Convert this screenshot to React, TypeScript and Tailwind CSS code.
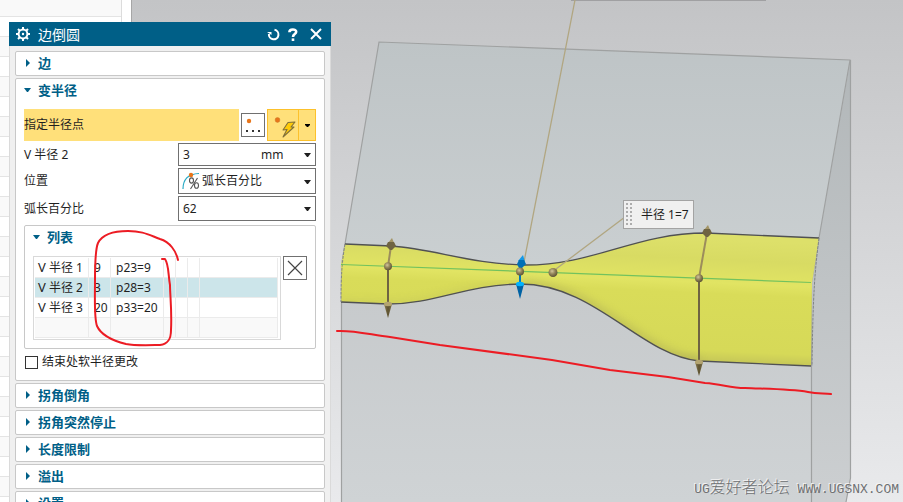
import type { ReactNode } from 'react';

const uiFont = "font-['Noto_Sans','Noto_Sans_CJK_SC',sans-serif]";

function Caret({ className = '' }: { className?: string }) {
  return (
    <svg width="9" height="5" viewBox="0 0 9 5" className={`shrink-0 ${className}`} aria-hidden="true">
      <path d="M1 1h7L5 5H4z" fill="currentColor" />
    </svg>
  );
}

function GroupTitle({ children, open = false }: { children: ReactNode; open?: boolean }) {
  return (
    <button
      type="button"
      aria-expanded={open}
      className="flex h-[22px] w-full items-center gap-[7px] pl-2 text-left text-[13px] leading-4 font-bold text-[#005f87]"
    >
      <svg width="7" height="8" viewBox="0 0 7 8" className="shrink-0" aria-hidden="true">
        {open ? <path d="M0 2h7L4 6H3z" fill="currentColor" /> : <path d="M2 0l4 4-4 4z" fill="currentColor" />}
      </svg>
      {children}
    </button>
  );
}

function Group({ title }: { title: string }) {
  return (
    <section className="shrink-0 rounded-xs border border-[#c8c8c8] bg-white pb-px">
      <h2>
        <GroupTitle>{title}</GroupTitle>
      </h2>
    </section>
  );
}

function TitleBar() {
  return (
    <header className="flex h-6 items-center bg-[#005f87] px-[7px] text-white">
      <svg width="14" height="14" viewBox="0 0 14 14" aria-hidden="true">
        <g stroke="currentColor" strokeWidth="2">
          <path d="M7 0v3M7 11v3M0 7h3M11 7h3M2 2l2 2M10 10l2 2M12 2l-2 2M2 12l2-2" />
          <circle cx="7" cy="7" r="4.4" fill="none" />
        </g>
        <circle cx="7" cy="7" r="1.2" fill="currentColor" />
      </svg>
      <h1 className="ml-2 flex-1 pt-px text-sm leading-5">边倒圆</h1>
      <div className="flex items-center gap-2">
        <button type="button" aria-label="重置">
          <svg width="13" height="13" viewBox="0 0 13 13" fill="none" stroke="currentColor" strokeWidth="2" aria-hidden="true">
            <path d="M7.500 1.800a4.800 4.800 0 1 1-5.600 4.200" />
            <path d="M0 4h4.500v3z" fill="currentColor" stroke="none" />
          </svg>
        </button>
        <button type="button" aria-label="帮助">
          <svg width="10" height="13" viewBox="0 0 10 13" fill="none" stroke="currentColor" strokeWidth="2.6" aria-hidden="true">
            <path d="M1.4 4.2C1.4 0.6 8.2 0.6 8.2 3.8 8.2 6.2 5 5.8 5 9" />
            <path d="M5 10.4V13" />
          </svg>
        </button>
        <button type="button" aria-label="关闭" className="mr-0.5 ml-1">
          <svg width="12" height="12" viewBox="0 0 12 12" fill="none" stroke="currentColor" strokeWidth="2" aria-hidden="true">
            <path d="M1 1l10 10M11 1L1 11" />
          </svg>
        </button>
      </div>
    </header>
  );
}

function PointRow() {
  return (
    <div className="flex h-8 items-center gap-0.5">
      <div className="flex h-8 flex-1 items-center bg-[#ffe07a]">指定半径点</div>
      <button type="button" aria-label="点对话框" className="border border-[#707070] bg-white">
        <svg width="22" height="22" viewBox="0 0 22 22" aria-hidden="true">
          <circle cx="7" cy="7" r="2.2" fill="#e8751a" />
          <path d="M4 16h2v2H4zM10 16h2v2h-2zM16 16h2v2h-2z" fill="#333" />
        </svg>
      </button>
      <div className="flex h-8 border border-[#fcc12c] bg-[#ffe07a]">
        <button type="button" aria-label="自动判断的点">
          <svg width="30" height="30" viewBox="0 0 30 30" aria-hidden="true">
            <circle cx="9.500" cy="10" r="2.4" fill="#e8751a" stroke="#c9762b" strokeWidth=".5" />
            <path d="M20 12.500L27 12l-4 5h3L15 27l4-7.500-4 .5z" fill="#ffcb08" stroke="#80703a" strokeWidth="1.100" strokeLinejoin="round" />
          </svg>
        </button>
        <button type="button" aria-label="更多点类型" className="flex w-[17px] items-center justify-center border-l border-[#fcc12c] text-black">
          <svg width="5" height="3" viewBox="0 0 5 3" aria-hidden="true">
            <path d="M0 0h5v1L3 3H2L0 1z" fill="currentColor" />
          </svg>
        </button>
      </div>
    </div>
  );
}

const fieldBox = 'flex w-[138px] items-center border border-[#707070] bg-white px-[3px]';

function Fields() {
  return (
    <div className="mt-0.5 flex flex-col gap-0.5">
      <div className="flex items-center justify-between">
        <label htmlFor="radius">V 半径 2</label>
        <div className={`${fieldBox} h-[23px]`}>
          <input id="radius" defaultValue="3" className="w-[78px] pl-px outline-none" />
          <select aria-label="单位" className="flex-1 appearance-none pl-px outline-none" defaultValue="mm">
            <option>mm</option>
          </select>
          <Caret />
        </div>
      </div>
      <div className="flex items-center justify-between">
        <label htmlFor="location">位置</label>
        <div className={`${fieldBox} h-[26px]`}>
          <svg width="18" height="18" viewBox="0 0 18 18" fill="none" aria-hidden="true">
            <path d="M1 17C1 9 5 2 17 1.500" stroke="#27a9c4" strokeWidth="1.200" />
            <circle cx="9" cy="3" r="2.200" fill="#e8751a" />
            <g stroke="#555" strokeWidth="1.100">
              <ellipse cx="9.500" cy="8.500" rx="2" ry="2.600" />
              <ellipse cx="14.500" cy="13.500" rx="2" ry="2.800" />
              <path d="M15.500 6L8.500 17" />
            </g>
          </svg>
          <select id="location" className="ml-0.5 min-w-0 flex-1 appearance-none outline-none" defaultValue="弧长百分比">
            <option>弧长百分比</option>
          </select>
          <Caret />
        </div>
      </div>
      <div className="flex items-center justify-between">
        <label htmlFor="arc">弧长百分比</label>
        <div className={`${fieldBox} h-[25px]`}>
          <input id="arc" defaultValue="62" className="min-w-0 flex-1 pl-px outline-none" />
          <button type="button" aria-label="弧长百分比选项">
            <Caret />
          </button>
        </div>
      </div>
    </div>
  );
}

const radii = [
  { name: 'V 半径 1', value: '9', expr: 'p23=9' },
  { name: 'V 半径 2', value: '3', expr: 'p28=3' },
  { name: 'V 半径 3', value: '20', expr: 'p33=20' },
  { name: '', value: '', expr: '' },
];

const rowTone = ['bg-white', 'bg-[#cce5ea]', 'bg-white', 'bg-[#f9f9f9]'];
const cell = 'h-5 border-r border-b border-[#ebebeb] p-0';

function RadiusList() {
  return (
    <div className="mt-1 h-[124px] rounded-xs border border-[#c8c8c8] bg-white">
      <h3>
        <GroupTitle open>列表</GroupTitle>
      </h3>
      <div className="mt-2 flex items-start gap-0.5 px-2">
        <div className="h-[84px] flex-1 border border-[#d9d9d9] p-px">
          <table className="w-[243px] table-fixed border-separate border-spacing-0 leading-4">
            <colgroup>
              <col className="w-[54px]" />
              <col className="w-[22px]" />
              <col className="w-[53px]" />
              <col className="w-3" />
              <col className="w-3" />
              <col className="w-3" />
              <col />
            </colgroup>
            <tbody>
              {radii.map((r, i) => (
                <tr key={i} className={rowTone[i]}>
                  <td className={`${cell} pl-[3px] text-[13px] whitespace-nowrap`}>{r.name.split(' ')[0]}{r.name && <span className="text-xs"> {r.name.slice(2)}</span>}</td>
                  <td className={`${cell} pl-[5px]`}>{r.value}</td>
                  <td className={`${cell} pl-[5px]`}>{r.expr}</td>
                  <td className={cell} />
                  <td className={cell} />
                  <td className={cell} />
                  <td className={cell} />
                </tr>
              ))}
            </tbody>
          </table>
        </div>
        <button type="button" aria-label="移除" className="border border-[#707070] bg-white">
          <svg width="22" height="22" viewBox="0 0 22 22" fill="none" stroke="#444" strokeWidth="1.200" aria-hidden="true">
            <path d="M4 4l14 14M18 4L4 18" />
          </svg>
        </button>
      </div>
    </div>
  );
}

function EdgeBlendDialog() {
  return (
    <section
      aria-label="边倒圆"
      className={`absolute top-[22px] bottom-0 left-[9px] flex w-[322px] flex-col text-xs leading-4 text-[#1f1f1f] ${uiFont}`}
    >
      <TitleBar />
      <div className="flex min-h-0 flex-1 flex-col gap-0.5 overflow-hidden border-x border-[#dadada] bg-[#f0f0f0] px-[5px] pt-[5px]">
        <Group title="边" />
        <section className="h-[303px] shrink-0 rounded-xs border border-[#c8c8c8] bg-white">
          <h2>
            <GroupTitle open>变半径</GroupTitle>
          </h2>
          <div className="mt-2 px-2">
            <PointRow />
            <Fields />
            <RadiusList />
            <div className="mt-[5px] flex items-center gap-1 pl-px">
              <input id="soft" type="checkbox" className="size-[13px] appearance-none border border-[#333] bg-white" />
              <label htmlFor="soft">结束处软半径更改</label>
            </div>
          </div>
        </section>
        <Group title="拐角倒角" />
        <Group title="拐角突然停止" />
        <Group title="长度限制" />
        <Group title="溢出" />
        <Group title="设置" />
      </div>
    </section>
  );
}

function Handle({ x, top, topX, bottom }: { x: number; top: number; topX: number; bottom: number }) {
  const midY = 264.5 + ((x - 341) * 18) / 470;
  return (
    <g>
      <path d={`M${x} ${midY}L${topX} ${top}`} stroke="#9c8d5c" strokeWidth="2" />
      <path d={`M${x} ${midY}V${bottom}`} stroke="#6f6442" strokeWidth="2" />
      <path d={`M${topX - 3} ${top - 3}l4 -5 2.500 6z`} fill="#a39465" />
      <path d={`M${topX - 5} ${top}l2 -4h6l2 4 -4 4h-2z`} fill="#6f6442" />
      <path d={`M${x - 4} ${bottom}l4 14 4 -14z`} fill="url(#cone)" />
      <ellipse cx={x} cy={bottom} rx="4" ry="2.200" fill="#b3a470" />
      <circle cx={x} cy={midY} r="4" fill="url(#ball)" />
    </g>
  );
}

const blendOutline =
  'M345 244L391 246C435 249 470 264 525 265C595 265 635 233 706 233L819 238L812 283L811 366L699 361C640 355 595 284 520 284C465 285 435 304 388 304L341 302V265Z';

function Model() {
  return (
    <svg className="block h-full w-full" aria-label="模型">
      <defs>
        <linearGradient id="face" gradientUnits="userSpaceOnUse" x1="0" y1="42" x2="0" y2="283">
          <stop offset="0" stopColor="#bec4c6" />
          <stop offset="1" stopColor="#cbd0d2" />
        </linearGradient>
        <linearGradient id="front" gradientUnits="userSpaceOnUse" x1="0" y1="270" x2="0" y2="502">
          <stop offset="0" stopColor="#c6c9cb" />
          <stop offset="1" stopColor="#cfd3d5" />
        </linearGradient>
        <linearGradient id="side" gradientUnits="userSpaceOnUse" x1="0" y1="60" x2="0" y2="502">
          <stop offset="0" stopColor="#b2b7b9" />
          <stop offset="1" stopColor="#cccfd1" />
        </linearGradient>
        <linearGradient id="blend" gradientUnits="userSpaceOnUse" x1="600" y1="234" x2="594" y2="370">
          <stop offset="0" stopColor="#dde06a" />
          <stop offset=".15" stopColor="#d8db63" />
          <stop offset=".32" stopColor="#e1e463" />
          <stop offset=".4" stopColor="#d9dc59" />
          <stop offset=".82" stopColor="#d6d958" />
          <stop offset="1" stopColor="#b2b158" />
        </linearGradient>
        <radialGradient id="ball" cx=".4" cy=".35" r=".65">
          <stop offset="0" stopColor="#d2c69b" />
          <stop offset=".5" stopColor="#93855a" />
          <stop offset="1" stopColor="#5e5436" />
        </radialGradient>
        <linearGradient id="cone">
          <stop offset="0" stopColor="#8e8052" />
          <stop offset=".5" stopColor="#5d5231" />
          <stop offset="1" stopColor="#7d7148" />
        </linearGradient>
        <clipPath id="blendClip">
          <path d={blendOutline} />
        </clipPath>
        <filter id="soft-edge" x="-10%" y="-20%" width="120%" height="140%">
          <feGaussianBlur stdDeviation="4" />
        </filter>
      </defs>
      <g transform="translate(-132 0)" fill="none">
        <path d="M571 .5H766" stroke="#a0a0a2" />
        <path d="M379 42L850 60L819 238L812 283L341 265L345 244Z" fill="url(#face)" />
        <path d="M850.500 60V478L846 502H812V283L819 238Z" fill="url(#side)" />
        <path d="M341 265L812 283V502H341Z" fill="url(#front)" />
        <path d="M850.500 60V478L846 502M341.500 502V265L345 244L379 42L850 60L819 238L811.500 283V502" stroke="#9fa1a1" strokeWidth="1.200" />
        <path d={blendOutline} fill="url(#blend)" />
        <g clipPath="url(#blendClip)">
          <path d="M520 284C595 284 640 355 699 361" stroke="#9c9a55" strokeWidth="6" opacity=".5" filter="url(#soft-edge)" />
          <path d="M341 303L388 304C435 304 465 285 520 284" stroke="#a9a957" strokeWidth="3" opacity=".5" filter="url(#soft-edge)" />
        </g>
        <g stroke="#505153" strokeWidth="1.300">
          <path d="M345 244L391 246C435 249 470 264 525 265C595 265 635 233 706 233L819 238" />
          <path d="M811 366L699 361C640 355 595 284 520 284C465 285 435 304 388 304L341 302" />
        </g>
        <path d="M819 238C815 270 813 290 812 366M345 244C342 262 341 275 341 302" stroke="#808486" strokeDasharray="3 1" />
        <path d="M341 264.500L811 282.500" stroke="#72c25e" strokeWidth="1.200" />
        <path d="M575 0L524 262M552 272L625 217" stroke="#b1a681" strokeWidth="1.300" />
        <Handle x={388} topX={391} top={246} bottom={304} />
        <Handle x={699} topX={707} top={233} bottom={362} />
        <path d="M520 272V286" stroke="#0077bd" strokeWidth="2" />
        <path d="M518 261l5 -6 2 7z" fill="#1599e6" />
        <path d="M517 264l2 -4h5l2 4 -4 4h-3z" fill="#006fb5" />
        <path d="M516 284l4 15 4 -15z" fill="#0062a4" />
        <ellipse cx="520" cy="284" rx="4" ry="2.200" fill="#00b2ff" />
        <circle cx="520" cy="271.500" r="4" fill="url(#ball)" />
        <circle cx="553" cy="272.500" r="4.500" fill="url(#ball)" />
      </g>
    </svg>
  );
}

function RadiusTag() {
  return (
    <div className={`absolute top-[200px] left-[491px] flex h-[29px] items-center border border-[#a3a3a3] bg-[#f0f0f0] pr-1 pl-0.5 text-xs leading-4 text-[#1f1f1f] ${uiFont}`}>
      <svg width="7" height="23" viewBox="0 0 7 23" className="mr-2" aria-hidden="true">
        <path d="M1 0v23M5 0v23" stroke="#adadad" strokeWidth="2" strokeDasharray="2 2" />
      </svg>
      半径 1=7
    </div>
  );
}

export default function App() {
  return (
    <div className="relative flex h-screen w-full overflow-hidden bg-white">
      <aside className="w-[131px] shrink-0 overflow-hidden">
        <div className="-mt-[3px] w-[122px] border-r border-[#dcdcdc]">
          {Array.from({ length: 60 }, (_, i) => (
            <div key={i} className={`h-5 border-b border-[#e4e4e4] ${i % 2 ? 'bg-white' : 'bg-[#f9f9f9]'}`} />
          ))}
        </div>
      </aside>
      <main className="relative min-w-0 flex-1 overflow-hidden border-l border-[#a6a6a6] bg-linear-to-b from-[#c3c4c6] to-[#e9eaec]">
        <Model />
        <RadiusTag />
        <p className="absolute right-1 bottom-0 font-['Liberation_Mono','Noto_Sans_CJK_SC',monospace] text-[13px] leading-6 whitespace-nowrap text-[#6f7173] [text-shadow:-1px_-1px_0_#f4f4f4]">
          UG<span className="text-base leading-6 font-light">爱好者论坛</span> WWW.UGSNX.COM
        </p>
      </main>
      <EdgeBlendDialog />
      <svg className="pointer-events-none absolute inset-0 h-full w-full" fill="none" stroke="#ec1c24" strokeWidth="2" strokeLinecap="round" strokeLinejoin="round" aria-hidden="true">
        <path d="M178 260C176 251 170 242 160 239C149 235 143 231 128 231C113 231 102 235 98 243C95 250 95 265 95 280C95 300 94 318 97 326C102 337 118 342 126 344C136 346 154 345 160 345C169 344 171 338 171 330C172 310 170 295 170 285C168 274 169 265 165 259L162 259" />
        <path d="M337 331C354 330 372 335 390 337L440 345L552 360L610 370L668 377L705 383C722 384 730 388 745 388C770 389 790 389 808 392C818 394 824 393 831 394" />
      </svg>
    </div>
  );
}
